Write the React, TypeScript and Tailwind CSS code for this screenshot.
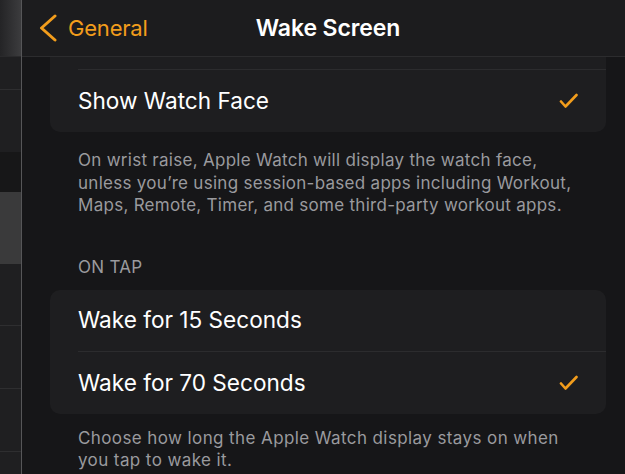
import React from 'react';

const font = { fontFamily: 'Inter, "Liberation Sans", sans-serif' };

function Check() {
  return (
    <svg width="19" height="16" viewBox="0 0 19 16" className="shrink-0">
      <path d="M2 8.5 L6.5 13.5 L17.5 2" fill="none" stroke="#f29d1c" strokeWidth="2.6" strokeLinecap="round" strokeLinejoin="round" />
    </svg>
  );
}

function Row({ label, checked, border }: { label: string; checked?: boolean; border?: boolean }) {
  return (
    <div className={`flex h-[62px] items-center pr-[28px] ${border ? 'border-b border-[#2c2c2e]' : ''}`}>
      <span className="flex-1 text-[22.6px] text-white">{label}</span>
      {checked && <Check />}
    </div>
  );
}

function Sidebar() {
  return (
    <div className="flex w-[22px] shrink-0 flex-col border-r border-[#565658] bg-[#1f1f21]">
      <div className="h-[57px] border-b border-[#2a2a2c] bg-gradient-to-r from-[#242426] to-[#3c3c3e]" />
      <div className="h-[33px] border-b border-[#2e2e30]" />
      <div className="h-[62px]" />
      <div className="h-[40px] bg-[#171718]" />
      <div className="h-[72px] bg-[#3a3a3b]" />
      <div className="h-[62px] border-b border-[#2e2e30]" />
      <div className="h-[63px] border-b border-[#2e2e30]" />
      <div className="h-[63px] border-b border-[#2e2e30]" />
      <div className="flex-1" />
    </div>
  );
}

export default function App() {
  return (
    <div className="flex h-[474px] w-[625px] overflow-hidden bg-[#161618]" style={font}>
      <Sidebar />
      <div className="flex w-[612px] shrink-0 flex-col">
        <div className="grid h-[57px] shrink-0 grid-cols-[1fr_auto_1fr] items-center border-b border-[#2c2c2e] bg-[#1c1c1e]">
          <div className="flex items-center gap-[10px] pl-[16px] text-[#f29d1c]">
            <svg width="20" height="28" viewBox="0 0 20 28">
              <path d="M17 2 L3.5 14 L17 26" fill="none" stroke="#f29d1c" strokeWidth="3" strokeLinecap="round" strokeLinejoin="round" />
            </svg>
            <span className="text-[22px] tracking-[-0.2px]">General</span>
          </div>
          <div className="text-[23px] font-semibold text-white tracking-[-0.1px]">Wake Screen</div>
          <div />
        </div>

        <div className="flex flex-col">
          <div className="mx-[28px] rounded-b-[10px] bg-[#1e1e20] pl-[28px]">
            <div className="h-[13px] border-b border-[#2c2c2e]" />
            <Row label="Show Watch Face" checked />
          </div>
          <p className="pl-[56px] pr-[46px] pt-[17px] text-[17px] leading-[22.5px] tracking-[0.28px] text-[#9a9a9e]">
            On wrist raise, Apple Watch will display the watch face, unless you’re using session-based apps including Workout, Maps, Remote, Timer, and some third-party workout apps.
          </p>
          <div className="px-[56px] pt-[40px] text-[17px] leading-[20px] tracking-[0.3px] text-[#9a9a9e]">ON TAP</div>
          <div className="mx-[28px] mt-[13px] rounded-[10px] bg-[#1e1e20] pl-[28px]">
            <Row label="Wake for 15 Seconds" border />
            <Row label="Wake for 70 Seconds" checked />
          </div>
          <p className="pl-[56px] pr-[49px] pt-[13px] text-[17px] leading-[22px] tracking-[0.4px] text-[#9a9a9e]">
            Choose how long the Apple Watch display stays on when you tap to wake it.
          </p>
        </div>
      </div>
    </div>
  );
}
